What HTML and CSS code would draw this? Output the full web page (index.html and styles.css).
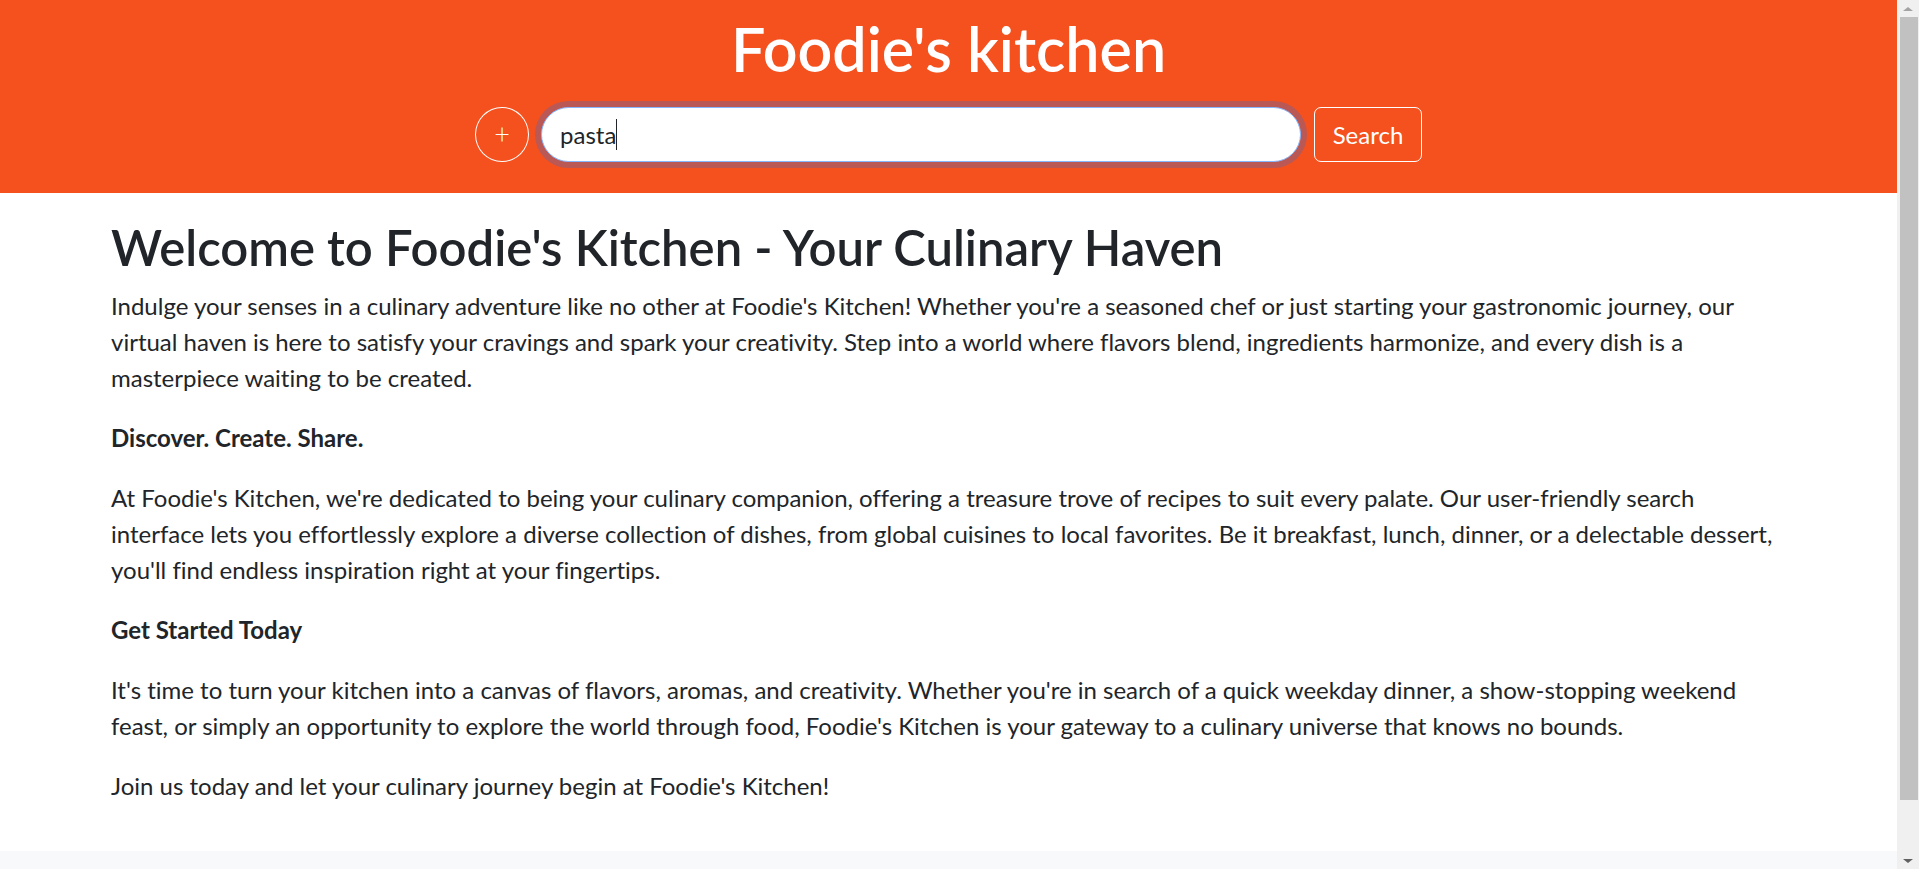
FILE: index.html
```html
<!DOCTYPE html>
<html lang="en">
<head>
<meta charset="utf-8">
<title>Foodie's kitchen</title>
<link rel="stylesheet" href="styles.css">
</head>
<body>
<header class="site-header">
  <h1 class="brand">Foodie's kitchen</h1>
  <form class="search-row">
    <button type="button" class="btn-add">+</button>
    <div class="search-field">
      <input class="search-input" type="text" value="pasta">
    </div>
    <button type="button" class="btn-search">Search</button>
  </form>
</header>
<main class="content">
  <h2 class="welcome">Welcome to Foodie's Kitchen - Your Culinary Haven</h2>
  <p>Indulge your senses in a culinary adventure like no other at Foodie's Kitchen! Whether you're a seasoned chef or just starting your gastronomic journey, our<br>virtual haven is here to satisfy your cravings and spark your creativity. Step into a world where flavors blend, ingredients harmonize, and every dish is a masterpiece waiting to be created.</p>
  <p><strong>Discover. Create. Share.</strong></p>
  <p>At Foodie's Kitchen, we're dedicated to being your culinary companion, offering a treasure trove of recipes to suit every palate. Our user-friendly search<br>interface lets you effortlessly explore a diverse collection of dishes, from global cuisines to local favorites. Be it breakfast, lunch, dinner, or a delectable dessert, you'll find endless inspiration right at your fingertips.</p>
  <p><strong>Get Started Today</strong></p>
  <p>It's time to turn your kitchen into a canvas of flavors, aromas, and creativity. Whether you're in search of a quick weekday dinner, a show-stopping weekend<br>feast, or simply an opportunity to explore the world through food, Foodie's Kitchen is your gateway to a culinary universe that knows no bounds.</p>
  <p>Join us today and let your culinary journey begin at Foodie's Kitchen!</p>
</main>
<footer class="site-footer"></footer>
<aside class="scrollbar" aria-hidden="true">
  <div class="sb-btn"><span class="sb-arrow-up"></span></div>
  <div class="sb-thumb"></div>
  <div class="sb-rest"></div>
  <div class="sb-btn"><span class="sb-arrow-down"></span></div>
</aside>
</body>
</html>
```
FILE: styles.css
```css
html, body {
  margin: 0;
  padding: 0;
}
body {
  margin-right: 22px;
  font-family: Lato, "Liberation Sans", sans-serif;
  font-variant-ligatures: none;
  color: #212529;
  background: #fff;
}
.site-header {
  background: #f4511e;
  padding: 13px 0 31px;
  text-align: center;
}
.brand {
  margin: 0;
  font-size: 61px;
  line-height: 72px;
  font-weight: 600;
  color: #fff;
}
.search-row {
  margin: 22px 0 0;
  display: flex;
  justify-content: center;
  align-items: center;
  gap: 12px;
}
.btn-add {
  width: 54px;
  height: 55px;
  border: 1px solid #fff;
  border-radius: 50%;
  background: transparent;
  color: #fff;
  font-family: inherit;
  font-size: 27px;
  font-weight: 300;
  line-height: 1;
  padding: 0 0 2px;
}
.search-field {
  position: relative;
  display: flex;
}
.search-field::after {
  content: "";
  position: absolute;
  left: 75px;
  top: 12px;
  width: 1px;
  height: 31px;
  background: #212529;
}
.search-input {
  box-sizing: border-box;
  width: 760px;
  height: 55px;
  border: 1px solid #86b7fe;
  border-radius: 28px;
  padding: 0 18px;
  font-family: inherit;
  font-size: 24px;
  color: #212529;
  background: #fff;
  box-shadow: 0 0 0 6px rgba(13, 110, 253, 0.25);
  outline: none;
}
.btn-search {
  box-sizing: border-box;
  width: 108px;
  height: 55px;
  margin-left: 1px;
  border: 1px solid #fff;
  border-radius: 7px;
  background: transparent;
  color: #fff;
  font-family: inherit;
  font-size: 24px;
  padding: 0;
}
.content {
  width: 1684px;
  margin-left: 111px;
  padding: 24px 0 23px;
}
.welcome {
  margin: 0 0 11px;
  font-size: 49px;
  line-height: 60px;
  font-weight: 600;
}
.content p {
  margin: 0 0 24px;
  font-size: 24px;
  line-height: 36px;
}
.content strong {
  font-weight: 700;
}
.site-footer {
  background: #f8f9fa;
  height: 83px;
}
.scrollbar {
  position: fixed;
  top: 0;
  right: 0;
  width: 22px;
  height: 100vh;
  background: #f0f0f0;
  display: flex;
  flex-direction: column;
  align-items: center;
}
.sb-btn {
  flex: none;
  height: 17px;
  width: 100%;
  display: flex;
  align-items: center;
  justify-content: center;
}
.sb-arrow-up {
  width: 0;
  height: 0;
  border-left: 5px solid transparent;
  border-right: 5px solid transparent;
  border-bottom: 4px solid #a3a3a3;
}
.sb-arrow-down {
  width: 0;
  height: 0;
  border-left: 5px solid transparent;
  border-right: 5px solid transparent;
  border-top: 4px solid #606060;
}
.sb-thumb {
  flex: none;
  width: 18px;
  height: 783px;
  margin-left: 1px;
  background: #c1c1c1;
}
.sb-rest {
  flex: 1;
}
```
